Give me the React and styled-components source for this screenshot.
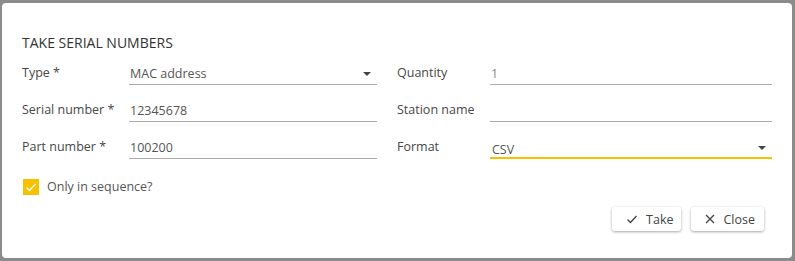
import React from 'react'
import styled, { createGlobalStyle } from 'styled-components'

const GlobalStyle = createGlobalStyle`
    body {
        margin: 0;
        background: #8b8b8b;
        font-family: "Open Sans", "Noto Sans", sans-serif;
    }
`

const Dialog = styled.div`
    margin: 3px 3px 3px 2px;
    height: 255px;
    box-sizing: border-box;
    background: #fff;
    border-radius: 4px;
    padding: 31px 20px 0 20px;
    display: flex;
    flex-direction: column;
`

const Title = styled.div`
    font-size: 14px;
    line-height: 18px;
    color: #333;
    margin-bottom: 8px;
`

const FormGrid = styled.div`
    display: grid;
    grid-template-columns: 107px 248px 113px 282px;
    row-gap: 12px;
    align-items: center;
`

const Label = styled.label`
    padding-left: ${props => props.indent ? 20 : 0}px;
    font-size: 12.5px;
    line-height: 18px;
    color: #474747;
    white-space: nowrap;
`

const Field = styled.div`
    position: relative;
    height: 25px;
    box-sizing: border-box;
    padding: ${props => props.focused ? '7px 0 0 2px' : '5px 0 0 1px'};
    border-bottom: ${props => props.focused ? '2px solid #f7c100' : '1px solid #ababab'};
    font-size: 12.5px;
    line-height: 18px;
    color: ${props => props.muted ? '#8a8a8a' : '#555'};
`

const Caret = styled.span`
    position: absolute;
    right: 6px;
    top: 12px;
    width: 0;
    height: 0;
    border-left: 4px solid transparent;
    border-right: 4px solid transparent;
    border-top: 4px solid #444;
`

const CheckRow = styled.label`
    display: flex;
    align-items: center;
    gap: 8px;
    margin-top: 19px;
    padding-left: 1px;
    font-size: 12.5px;
    color: #555;
`

const Box = styled.span`
    width: 16px;
    height: 16px;
    background: #f7c100;
    display: flex;
    align-items: center;
    justify-content: center;
`

const Actions = styled.div`
    display: flex;
    justify-content: flex-end;
    gap: 10px;
    margin-top: 12px;
    padding-right: 8px;
`

const Button = styled.button`
    height: 24px;
    padding: 0 ${props => props.padRight}px 0 ${props => props.padLeft}px;
    display: flex;
    align-items: center;
    gap: 8px;
    border: none;
    background: #fff;
    border-radius: 3px;
    box-shadow: 0 1px 3px rgba(0, 0, 0, 0.35);
    font-family: inherit;
    font-size: 12.5px;
    color: #444;
`

function CheckIcon({ color = '#444', size = 12 }) {
    return (
        <svg width={size} height={size} viewBox="0 0 12 12" fill="none">
            <path d="M1.5 6.5 L4.5 9.5 L10.5 3" stroke={color} strokeWidth="1.3" />
        </svg>
    )
}

function CloseIcon() {
    return (
        <svg width="10" height="10" viewBox="0 0 10 10" fill="none">
            <path d="M1 1 L9 9 M9 1 L1 9" stroke="#444" strokeWidth="1.3" />
        </svg>
    )
}

export default function App() {
    return (
        <>
            <GlobalStyle />
            <Dialog>
                <Title>TAKE SERIAL NUMBERS</Title>
                <FormGrid>
                    <Label>Type *</Label>
                    <Field>MAC address<Caret /></Field>
                    <Label indent>Quantity</Label>
                    <Field muted>1</Field>

                    <Label>Serial number *</Label>
                    <Field>12345678</Field>
                    <Label indent>Station name</Label>
                    <Field></Field>

                    <Label>Part number *</Label>
                    <Field>100200</Field>
                    <Label indent>Format</Label>
                    <Field focused>CSV<Caret /></Field>
                </FormGrid>
                <CheckRow>
                    <Box><CheckIcon color="#fff" size={12} /></Box>
                    Only in sequence?
                </CheckRow>
                <Actions>
                    <Button padLeft={14} padRight={8}><CheckIcon />Take</Button>
                    <Button padLeft={14} padRight={9}><CloseIcon />Close</Button>
                </Actions>
            </Dialog>
        </>
    )
}
